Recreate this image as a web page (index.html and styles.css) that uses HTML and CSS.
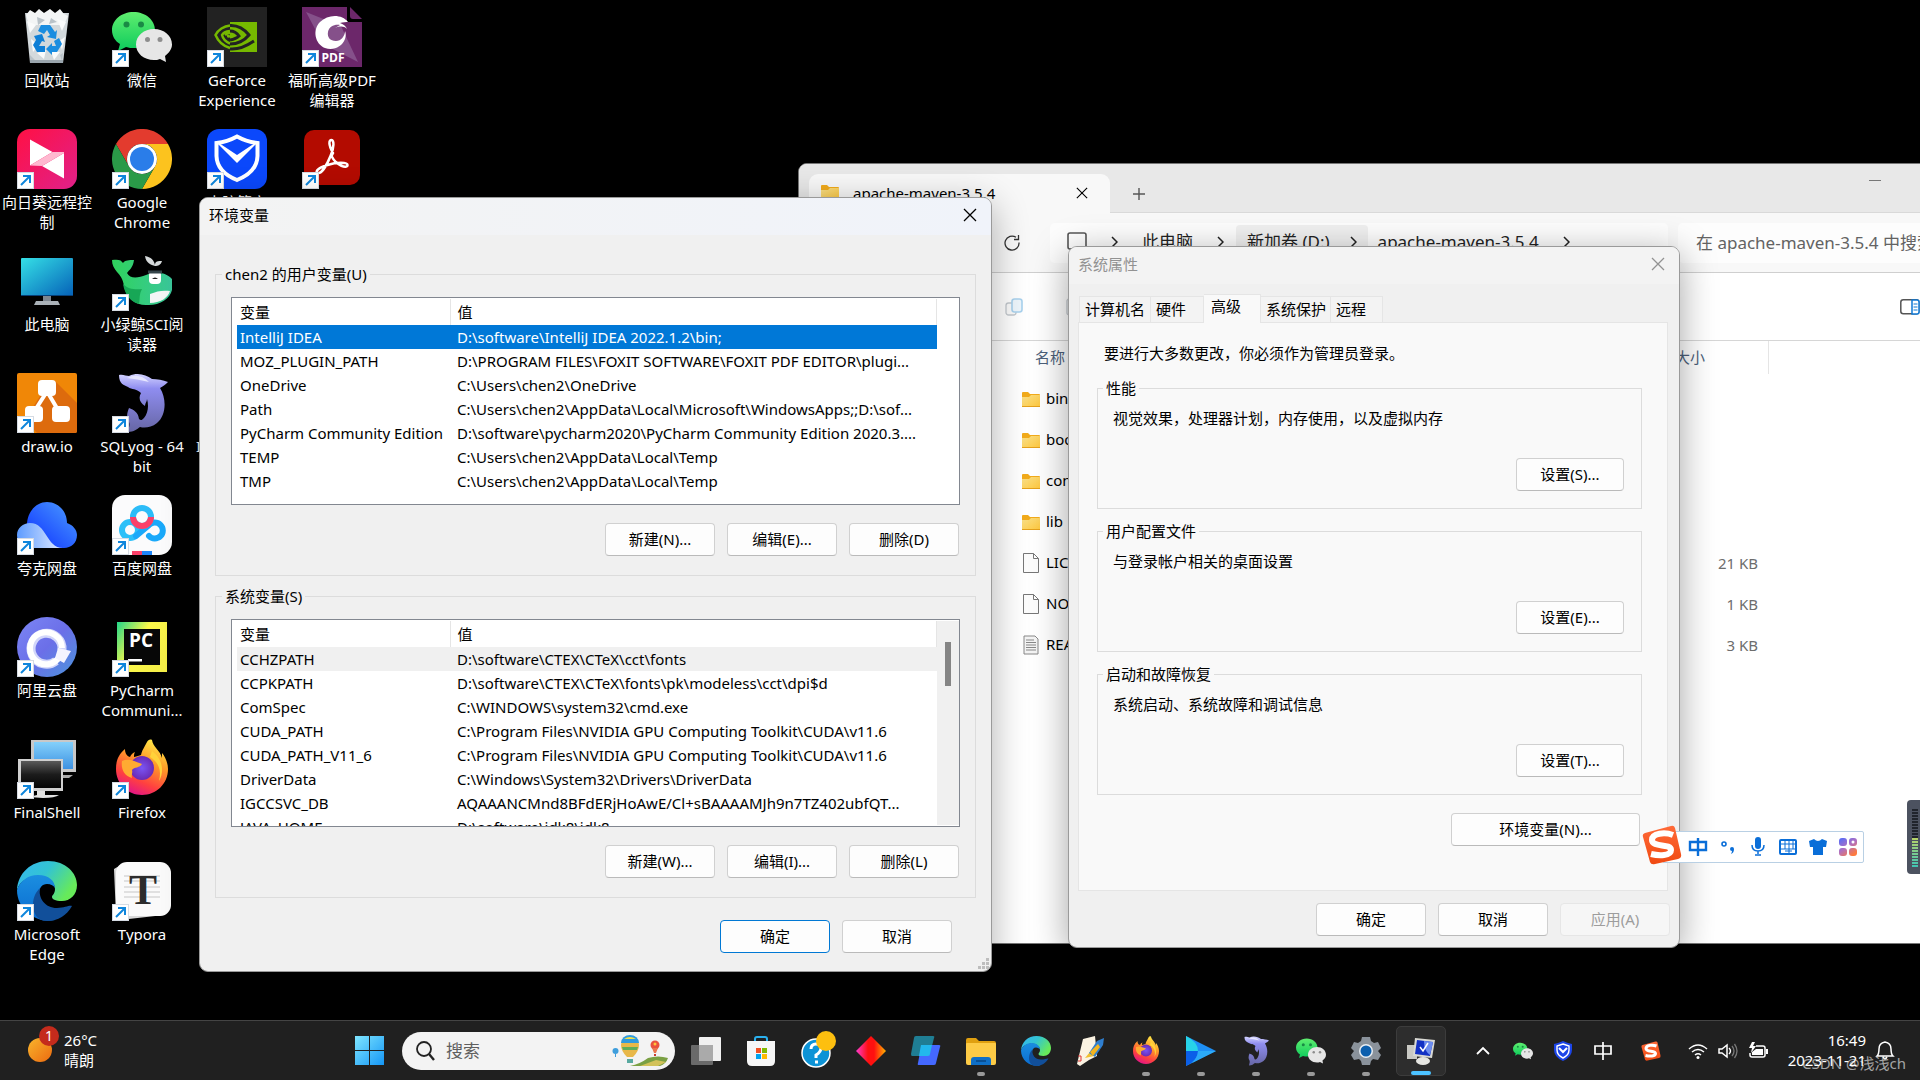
FILE: index.html
```html
<!DOCTYPE html>
<html lang="zh-CN">
<head>
<meta charset="utf-8">
<title>桌面</title>
<meta name="viewport" content="width=device-width, initial-scale=1">
<link rel="stylesheet" href="styles.css">
</head>
<body>
<svg class="defs" aria-hidden="true">
  <defs>
    <linearGradient id="gWechat" x1="0" y1="0" x2="0" y2="1"><stop offset="0" stop-color="#5fee6f"/><stop offset="1" stop-color="#0ccb5c"/></linearGradient>
    <linearGradient id="gSun" x1="0" y1="0" x2="1" y2="1"><stop offset="0" stop-color="#ff1044"/><stop offset="1" stop-color="#e0218a"/></linearGradient>
    <linearGradient id="gScreen" x1="0" y1="0" x2="1" y2="1"><stop offset="0" stop-color="#35e0e6"/><stop offset="1" stop-color="#0561b8"/></linearGradient>
    <linearGradient id="gWhale" x1="0" y1="0" x2="1" y2="0"><stop offset="0" stop-color="#2fd35c"/><stop offset="1" stop-color="#3ac79b"/></linearGradient>
    <linearGradient id="gDolphin" x1="0" y1="0" x2="0" y2="1"><stop offset="0" stop-color="#d3d3ff"/><stop offset=".25" stop-color="#8f8df0"/><stop offset="1" stop-color="#6666a4"/></linearGradient>
    <linearGradient id="gQuark" x1="0" y1="1" x2="1" y2="0"><stop offset="0" stop-color="#0a2cff"/><stop offset="1" stop-color="#4ea0ff"/></linearGradient>
    <linearGradient id="gQuark2" x1="0" y1="0" x2="1" y2="0"><stop offset="0" stop-color="#5d9bff"/><stop offset="1" stop-color="#e4ecff"/></linearGradient>
    <linearGradient id="gAli" x1="0" y1="0" x2="1" y2="1"><stop offset="0" stop-color="#7c86f5"/><stop offset=".5" stop-color="#6b6fe8"/><stop offset="1" stop-color="#4b94dc"/></linearGradient>
    <linearGradient id="gPy" x1="0" y1="0" x2="1" y2=".6"><stop offset="0" stop-color="#21d789"/><stop offset=".5" stop-color="#fcf84a"/><stop offset="1" stop-color="#f5ef48"/></linearGradient>
    <linearGradient id="gBlueScr" x1="0" y1="0" x2="0" y2="1"><stop offset="0" stop-color="#83d0fb"/><stop offset="1" stop-color="#3e92e2"/></linearGradient>
    <linearGradient id="gDarkScr" x1="0" y1="0" x2="0" y2="1"><stop offset="0" stop-color="#5a5a5a"/><stop offset=".5" stop-color="#1c1c1c"/><stop offset="1" stop-color="#050505"/></linearGradient>
    <linearGradient id="gFox" x1=".8" y1="0" x2=".35" y2="1"><stop offset="0" stop-color="#fff04a"/><stop offset=".4" stop-color="#ff9a28"/><stop offset=".75" stop-color="#ff4040"/><stop offset="1" stop-color="#e31587"/></linearGradient>
    <radialGradient id="gFoxBall"><stop offset="0" stop-color="#7a55f5"/><stop offset="1" stop-color="#6a2bb4"/></radialGradient>
    <linearGradient id="gEdge1" x1="0" y1="0" x2="1" y2=".5"><stop offset="0" stop-color="#35b6f2"/><stop offset=".5" stop-color="#33c4d2"/><stop offset="1" stop-color="#67ea5a"/></linearGradient>
    <linearGradient id="gEdge2" x1="0" y1="0" x2="0" y2="1"><stop offset="0" stop-color="#1b8ee0"/><stop offset="1" stop-color="#0a6cd0"/></linearGradient>
    <linearGradient id="gFolder" x1="0" y1="0" x2="1" y2="1"><stop offset="0" stop-color="#f9e08a"/><stop offset="1" stop-color="#ffc83d"/></linearGradient>
    <linearGradient id="gWin" x1="0" y1="0" x2="1" y2="1"><stop offset="0" stop-color="#7fe6ff"/><stop offset="1" stop-color="#1596f5"/></linearGradient>
    <linearGradient id="gDia" x1="0" y1="0" x2="1" y2="0"><stop offset="0" stop-color="#ff3bd0"/><stop offset=".4" stop-color="#ff1010"/><stop offset=".6" stop-color="#ff1010"/><stop offset="1" stop-color="#ffb400"/></linearGradient>
    <linearGradient id="gWeather" x1="0" y1="0" x2="1" y2="1"><stop offset="0" stop-color="#f8b52c"/><stop offset="1" stop-color="#ec6a10"/></linearGradient>
    <linearGradient id="gSogou" x1="0" y1="0" x2="0" y2="1"><stop offset="0" stop-color="#ff6a38"/><stop offset="1" stop-color="#f04a12"/></linearGradient>
    <linearGradient id="gApps" gradientUnits="userSpaceOnUse" x1="2" y1="2" x2="14" y2="19"><stop offset="0" stop-color="#5b6cf5"/><stop offset=".5" stop-color="#b070c0"/><stop offset="1" stop-color="#ff7a3c"/></linearGradient>
  </defs>
  <symbol id="badge" viewBox="0 0 17 17"><rect width="17" height="17" rx="1" fill="#fff"/><rect x=".5" y=".5" width="16" height="16" fill="none" stroke="#d5dbe3"/><path d="M4 13 12.5 4.500M6 4h7v7" fill="none" stroke="#0f86dc" stroke-width="2"/></symbol>
  <symbol id="recycle" viewBox="0 0 60 60">
    <path d="M8 6h44l-6 50H13z" fill="#d3d9dc"/><path d="M9 8 13 3l5 3 4-4 5 4 6-4 5 4 5-4 4 5 4 2-4 9H12z" fill="#f3f5f5"/>
    <path d="m10 14 9 4-6 8zm30-2 9 3-4 9zM14 32l8 6-6 7zm28 2 6-4-3 13zM20 46l9-3-2 9zm14-2 9 1-6 8z" fill="#fafbfb"/><path d="m20 10 8 3-7 5zm14 1 6 4-8 2zM13 48l5 5h-5zm30 0 3-2-1 8z" fill="#b9c2c8"/><path d="M13 53h33v3H13z" fill="#9aa5ad"/>
    <path d="m24 18 9 0 5 7 2-2-1 9-9-2 3-2-3-5-3 4-6-3z" fill="#1a8de0"/><path d="m17 29 8-2 3 8-3-1-3 5 6 0v6h-8l-4-7 3-5z" fill="#0f7fd6"/><path d="m37 34 5-3 3 6-5 8h-5v3l-6-6 6-6v3h4z" fill="#1a8de0"/>
  </symbol>
  <symbol id="wechat" viewBox="0 0 60 60">
    <path d="M21.500 5C9.500 5 0 13 0 23c0 6 3 11 8 14l-2 7 8-4c3 1 5 1 8 1 12 0 21-8 21-18S33.500 5 21.500 5z" fill="url(#gWechat)"/><circle cx="14.500" cy="17.500" r="3" fill="#1a8a45"/><circle cx="29" cy="17.500" r="3" fill="#1a8a45"/>
    <path d="M42 22c-10 0-18 6.500-18 15.500S32 53 42 53c2 0 4 0 6-1l6 3-1-6c4-3 7-7 7-11.500C60 28.500 52 22 42 22z" fill="#e6e6e6"/><circle cx="35.500" cy="32.500" r="2.500" fill="#8d8d8d"/><circle cx="48" cy="32.500" r="2.500" fill="#8d8d8d"/>
  </symbol>
  <symbol id="nvidia" viewBox="0 0 60 60">
    <path d="M0 0h60v60H0z" fill="#222"/><path d="M23 15h27v30H23z" fill="#76b900"/>
    <g fill="none" stroke-width="2.500"><path d="M23 18.500C17 19 11 23 8.500 28 11 34 16 39 23 41" stroke="#76b900"/><path d="M23 24c-4 .5-7 2-8 4 1 4 4 7 8 8.500" stroke="#76b900"/><path d="M23 30c-1-1-2-1-3-1M23 26c-2 0-4 1-5 2" stroke="#76b900"/><path d="M23 18.500c9-.5 15 4.500 19 9.500-5 6-11 9-19 9" stroke="#222" stroke-width="3"/><path d="M23 24c4 0 7 2 9 5-2 2-4 3-9 4" stroke="#222" stroke-width="3"/><path d="M23 42c10 1 18-4 24-8" stroke="#222" stroke-width="3"/></g>
  </symbol>
  <symbol id="foxit" viewBox="0 0 60 60">
    <path d="M0 0h45v15h15v45H0z" fill="#6c276a"/><path d="M48 0 60 12H51q-3 0-3-3z" fill="#6c276a"/><path d="m4 5 35 14 17 36-35-18z" fill="#85508a"/>
    <path d="M46 15C40 7 26 7 18 15s-5 22 5 26c8 3 17-1 20-9 1-3 1-6 0-8 0 5-4 10-9 10-6 0-9-4-8-9 1-6 7-8 12-7l-5 3c5-2 9-2 12 1-1-3-4-5-7-6 3-1 6-1 8-1z" fill="#fff"/>
    <text x="31" y="55" text-anchor="middle" class="svg-pdf">PDF</text>
  </symbol>
  <symbol id="sunflower" viewBox="0 0 60 60"><rect width="60" height="60" rx="13" fill="url(#gSun)"/><path d="M13 10.500 35.500 23 13 36.500zM47 24v25.500L25 37z" fill="#fff"/><path d="M35.500 23H47v1L25 37l-12-.5z" fill="#ffb8d0"/></symbol>
  <symbol id="chrome" viewBox="0 0 60 60"><path d="M4 15a30 30 0 0 1 52 0H30a15 15 0 0 0-13 22.500z" fill="#e33b2e"/><path d="M56 15a30 30 0 0 1-26 45l13-22.500A15 15 0 0 0 30 15z" fill="#fcc31e"/><path d="M30 60A30 30 0 0 1 4 15l13 22.500a15 15 0 0 0 26 0z" fill="#2a9a48"/><circle cx="30" cy="30" r="15" fill="#fff"/><circle cx="30" cy="30" r="12" fill="#2a7de9"/></symbol>
  <symbol id="guard" viewBox="0 0 60 60"><rect width="60" height="60" rx="12" fill="#0b48fb"/><path d="M9.500 14Q20 13 30 7.500 40 13 50.500 14v13Q50 43 30 51 10 43 9.500 27z" fill="none" stroke="#fff" stroke-width="4"/><path d="M12 16 30 34 48 16v-2L30 26 12 14z" fill="#fff"/></symbol>
  <symbol id="acrobat" viewBox="0 0 60 60"><rect x="2" y="1" width="56" height="55" rx="10" fill="#b30b00"/><path d="M31 24c-5-9-4-13-1.500-13s3 7-1 16c-4 10-9 17-12 17-4 0-2-5 9-8 9-3 20-3 20 0 0 4-11 1-16-9z" fill="none" stroke="#fff" stroke-width="2.500"/></symbol>
  <symbol id="thispc" viewBox="0 0 60 60"><path d="M26 44h8v6h-8z" fill="#7d8690"/><path d="M19 50h22l2 4H17z" fill="#aab1b8"/><rect x="4" y="7" width="52" height="38" rx="1" fill="url(#gScreen)"/><path d="M4 44h52v1H4z" fill="#063f78"/></symbol>
  <symbol id="whale" viewBox="0 0 60 60"><path d="M0 9c7-1 9 0 11 3 2-3 6-3 11-3-1 8-5 10-7 13 3 6 11 5 19 2 9-4 20-3 26 4v11c-2 9-13 16-26 15-11 0-20-7-22-19C11 28 8 24 5 21 2 17 0 14 0 9z" fill="url(#gWhale)"/><path d="M11 33c5 5 12 6 19 5-3 5-2 10-3 15-8-2-14-9-16-20z" fill="#17a756"/><path d="M38 43c7-3 13-4 20-3-2 7-10 12-20 12z" fill="#f3f5f5"/><rect x="37" y="20" width="12" height="13" rx="4" fill="#fff"/><path d="M36 21h14" stroke="#35454a" stroke-width="3"/><path d="M40 28q3-3 6 0z" fill="#222"/><path d="M33 5c6 1 9 4 10 9 0-4 3-4 7-4-1 4-4 5-7 5-4-1-9-3-10-10z" fill="#d5d9da"/></symbol>
  <symbol id="drawio" viewBox="0 0 60 60"><rect width="60" height="60" rx="2" fill="#f08707"/><path d="m38 8 22 22v28q0 2-2 2H20L8 47l15-24z" fill="#dd6b0d"/><path d="M29 20 15 42M31 20l13 22" stroke="#fff" stroke-width="4"/><g fill="#fff"><rect x="21" y="7" width="18" height="16" rx="4"/><rect x="8" y="33" width="18" height="16" rx="4"/><rect x="35" y="33" width="18" height="16" rx="4"/></g></symbol>
  <symbol id="dolphin" viewBox="0 0 60 60"><path d="M7 2c4-1 7 1 10 1 9-4 17-1 23 3 5 0 11 1 16 3-3 3-5 4-8 6 7 11 6 28-3 35-6 5-13 5-17 4-3 2-6 5-12 5 1-5 2-7 1-10-3-4-2-9 0-14 5 2 9 4 10 11 2 2 3 1 5-1 4-5 5-12 3-19 0 3-2 4-2 7-5-3-7-8-4-13-5-5-9-3-13-6-4-2-9-3-9-12z" fill="url(#gDolphin)"/><path d="M15 5q12-6 22 4-12-3-22-4z" fill="#e6e6ff"/></symbol>
  <symbol id="quark" viewBox="0 0 60 60"><path d="M10 30C10 17 19 7 30 7s20 9 20 21c6 2 10 7 10 12 0 8-6 13-13 13H12z" fill="url(#gQuark)"/><path d="M0 40c0-7 6-12 13-12 17 0 16 25 33 25H12C5 53 0 48 0 40z" fill="url(#gQuark2)"/></symbol>
  <symbol id="baidu" viewBox="0 0 60 60"><rect width="60" height="60" rx="13" fill="#fbfbfc"/><g fill="none" stroke-width="6"><circle cx="18" cy="35" r="8" stroke="#2cc0f8"/><path d="M24 41 37 30a8 8 0 1 1 0 11" stroke="#1aa9fa" stroke-linecap="round"/><circle cx="30" cy="22" r="9" stroke="#2cbcf8"/><path d="M21 22a9 9 0 0 0 18 0" stroke="#fb4069"/></g><path d="M20 56h10v4H20z" fill="#fb4069"/><path d="M30 56h10v4H30z" fill="#1d86fa"/></symbol>
  <symbol id="aliyun" viewBox="0 0 60 60"><circle cx="30" cy="30" r="30" fill="url(#gAli)"/><path d="M45 33a15.500 15.500 0 1 0-6 11" fill="none" stroke="#d2d6fa" stroke-width="9"/><path d="M45 31a16 16 0 1 0-2 8" fill="none" stroke="#fff" stroke-width="6"/><path d="m41 31 13 3-7 12-9-5z" fill="#f4f4ff"/></symbol>
  <symbol id="pycharm" viewBox="0 0 60 60"><rect x="5" y="5" width="50" height="50" fill="url(#gPy)"/><rect x="12" y="12" width="36" height="36" fill="#070707"/><text x="29" y="30" text-anchor="middle" class="svg-pc">PC</text><path d="M16 42h14v2.500H16z" fill="#fff"/></symbol>
  <symbol id="finalshell" viewBox="0 0 60 60"><path d="M14 1h45v32H14z" fill="#c8c8c8"/><path d="M17 3h39v27H17z" fill="url(#gBlueScr)"/><path d="M38 36h18l-4 3H36z" fill="#aaa"/><path d="M1 20h45v32H1z" fill="#d0d0d0"/><path d="M4 22h40v27H4z" fill="url(#gDarkScr)"/><path d="M20 52h8v4h14q-4 3-16 3l-14-1 8-2z" fill="#e2e2e2"/></symbol>
  <symbol id="firefox" viewBox="0 0 60 60"><path d="M35 3c-3 6-5 8-6 13-2 1-4 1-7 2 0-2 0-3 1-5-3 1-4 3-5 5-4-1-5-5-5-8C6 16 4 22 4 30c0 15 12 26 26 26s26-11 26-26c0-6-3-13-6-16v5c-2-8-9-11-10-18-2-1-4 0-5 2z" fill="url(#gFox)"/><circle cx="30" cy="29" r="12" fill="url(#gFoxBall)"/><path d="M10 22c6-3 12 0 20 3-2 4-8 3-10 6 1 3-1 5 0 8C11 36 9 29 10 22z" fill="#ffab32"/><path d="M40 12c10 7 13 20 7 30 3-12-1-19-9-24z" fill="#ffd23a"/></symbol>
  <symbol id="edge" viewBox="0 0 60 60"><path d="M0 29C1 12 14 0 31 0c18 0 29 12 29 24 0 10-7 16-15 16-7 0-10-2-10-4s3-3 3-8c0-7-7-13-16-13S3 19 0 29z" fill="url(#gEdge1)"/><path d="M0 29c3-9 11-15 21-15 11 0 17 6 17 13-1-2-4-4-8-4-5 0-8 4-8 10 0 15 14 22 16 26-17 4-38-9-38-30z" fill="url(#gEdge2)"/><path d="M23 27c-2 10 5 20 17 20 8 0 12-3 15-2-5 9-14 15-25 15-10 0-14-8-14-16s3-13 7-17z" fill="#114f9a"/></symbol>
  <symbol id="typora" viewBox="0 0 60 60"><path d="m2 8 10-6 40 52-44 5q-4 0-4-4z" fill="#d8d8d8"/><rect x="4" y="1" width="55" height="54" rx="11" fill="#fafafa"/><path d="M12 15h36M12 20h36M12 26h36M12 31h36M12 36h36" stroke="#e0e0e0" stroke-width="2"/><text x="31" y="43" text-anchor="middle" class="svg-t">T</text></symbol>
  <symbol id="folder" viewBox="0 0 18 16"><path d="M0 1q0-1 1-1h5l2 2h9q1 0 1 1v12H0z" fill="#f2ab1b"/><path d="M0 5 7 5 9 3h9v11q0 1-1 1H1q-1 0-1-1z" fill="url(#gFolder)"/><path d="M0 14.500h18" stroke="#e5a11c"/></symbol>
  <symbol id="file" viewBox="0 0 18 20"><path d="M1.500.5h10l5 5v14h-15zM11.500.5v5h5" fill="#fcfcfc" stroke="#777"/></symbol>
  <symbol id="txt" viewBox="0 0 18 20"><path d="M2 1h11l3 3v15H2z" fill="#f4f4f4" stroke="#888"/><path d="M4 5h8M4 7.500h10M4 10h10M4 12.500h10M4 15h10" stroke="#888"/></symbol>
  <symbol id="close" viewBox="0 0 14 14"><path d="m1 1 12 12M13 1 1 13" fill="none" stroke="currentColor" stroke-width="1.300"/></symbol>
  <symbol id="chev" viewBox="0 0 7 12"><path d="m1 1 5 5-5 5" fill="none" stroke="#222" stroke-width="1.500"/></symbol>
  <symbol id="sogou" viewBox="0 0 40 40"><path d="M3 8 29 1q3-1 4 2l6 26q1 4-3 5L13 39q-4 1-5-2L1 12q-1-3 2-4z" fill="url(#gSogou)"/><path d="M31 10c-8-3-21-2-21 5 0 8 19 3 19 10 0 6-12 6-20 4" fill="none" stroke="#fff" stroke-width="6"/></symbol>
</svg>

<main class="desktop">
  <nav class="icons" aria-label="桌面图标">
    <a class="shortcut" href="#"><span class="pic"><svg><use href="#recycle"/></svg></span><span>回收站</span></a>
    <a class="shortcut" href="#"><span class="pic"><svg><use href="#sunflower"/></svg><svg class="arrow"><use href="#badge"/></svg></span><span>向日葵远程控<br>制</span></a>
    <a class="shortcut" href="#"><span class="pic"><svg><use href="#thispc"/></svg></span><span>此电脑</span></a>
    <a class="shortcut" href="#"><span class="pic"><svg><use href="#drawio"/></svg><svg class="arrow"><use href="#badge"/></svg></span><span>draw.io</span></a>
    <a class="shortcut" href="#"><span class="pic"><svg><use href="#quark"/></svg><svg class="arrow"><use href="#badge"/></svg></span><span>夸克网盘</span></a>
    <a class="shortcut" href="#"><span class="pic"><svg><use href="#aliyun"/></svg><svg class="arrow"><use href="#badge"/></svg></span><span>阿里云盘</span></a>
    <a class="shortcut" href="#"><span class="pic"><svg><use href="#finalshell"/></svg><svg class="arrow"><use href="#badge"/></svg></span><span>FinalShell</span></a>
    <a class="shortcut" href="#"><span class="pic"><svg><use href="#edge"/></svg><svg class="arrow"><use href="#badge"/></svg></span><span>Microsoft<br>Edge</span></a>
    <a class="shortcut" href="#"><span class="pic"><svg><use href="#wechat"/></svg><svg class="arrow"><use href="#badge"/></svg></span><span>微信</span></a>
    <a class="shortcut" href="#"><span class="pic"><svg><use href="#chrome"/></svg><svg class="arrow"><use href="#badge"/></svg></span><span>Google<br>Chrome</span></a>
    <a class="shortcut" href="#"><span class="pic"><svg><use href="#whale"/></svg><svg class="arrow"><use href="#badge"/></svg></span><span>小绿鲸SCI阅<br>读器</span></a>
    <a class="shortcut" href="#"><span class="pic"><svg><use href="#dolphin"/></svg><svg class="arrow"><use href="#badge"/></svg></span><span>SQLyog - 64<br>bit</span></a>
    <a class="shortcut" href="#"><span class="pic"><svg><use href="#baidu"/></svg><svg class="arrow"><use href="#badge"/></svg></span><span>百度网盘</span></a>
    <a class="shortcut" href="#"><span class="pic"><svg><use href="#pycharm"/></svg><svg class="arrow"><use href="#badge"/></svg></span><span>PyCharm<br>Communi...</span></a>
    <a class="shortcut" href="#"><span class="pic"><svg><use href="#firefox"/></svg><svg class="arrow"><use href="#badge"/></svg></span><span>Firefox</span></a>
    <a class="shortcut" href="#"><span class="pic"><svg><use href="#typora"/></svg><svg class="arrow"><use href="#badge"/></svg></span><span>Typora</span></a>
    <a class="shortcut" href="#"><span class="pic"><svg><use href="#nvidia"/></svg><svg class="arrow"><use href="#badge"/></svg></span><span>GeForce<br>Experience</span></a>
    <a class="shortcut" href="#"><span class="pic"><svg><use href="#guard"/></svg><svg class="arrow"><use href="#badge"/></svg></span><span>电脑管家</span></a>
    <a class="shortcut row4" href="#"><span class="pic"></span><span>IntelliJ IDEA</span></a>
    <a class="shortcut column4" href="#"><span class="pic"><svg><use href="#foxit"/></svg><svg class="arrow"><use href="#badge"/></svg></span><span>福昕高级PDF<br>编辑器</span></a>
    <a class="shortcut column4 row2" href="#"><span class="pic"><svg><use href="#acrobat"/></svg><svg class="arrow"><use href="#badge"/></svg></span><span>Acrobat</span></a>
  </nav>

  <section class="window explorer" aria-label="apache-maven-3.5.4">
    <header class="tabstrip">
      <div class="etab"><svg class="i18"><use href="#folder"/></svg><span>apache-maven-3.5.4</span><button class="bare" aria-label="关闭标签页"><svg class="i12"><use href="#close"/></svg></button></div>
      <button class="bare newtab" aria-label="新建标签页"><svg class="i12" viewBox="0 0 12 12"><path d="M6 0v12M0 6h12" stroke="#555" stroke-width="1.400" fill="none"/></svg></button>
      <button class="bare minimise" aria-label="最小化"></button>
    </header>
    <div class="addressrow">
      <button class="bare refresh" aria-label="刷新"><svg class="i18" viewBox="0 0 18 18"><path d="M16 8.500A7 7 0 1 1 13 3.300M15.500 1v4.500H11" fill="none" stroke="#333" stroke-width="1.300"/></svg></button>
      <div class="address">
        <svg class="i20" viewBox="0 0 20 20"><rect x="1" y="1" width="18" height="16" rx="2" fill="none" stroke="#555" stroke-width="1.600"/><path d="M6 19h8" stroke="#555"/></svg>
        <svg class="chev"><use href="#chev"/></svg>
        <a href="#">此电脑</a>
        <svg class="chev"><use href="#chev"/></svg>
        <span class="crumb"><a href="#">新加卷 (D:)</a><svg class="chev"><use href="#chev"/></svg></span>
        <a href="#">apache-maven-3.5.4</a>
        <svg class="chev"><use href="#chev"/></svg>
      </div>
      <input class="esearch" type="search" aria-label="搜索" placeholder="在 apache-maven-3.5.4 中搜索">
    </div>
    <div class="toolbar">
      <button class="bare" aria-label="复制"><svg class="i18" viewBox="0 0 18 18"><rect x="1" y="5" width="10" height="12" rx="2.500" fill="#fafafa" stroke="#c4c9ce" stroke-width="1.300"/><rect x="7" y="1" width="10" height="13" rx="2.500" fill="#eef6fc" stroke="#a9d2ee" stroke-width="1.600"/></svg></button>
      <button class="bare" aria-label="粘贴"><svg class="i18" viewBox="0 0 18 18"><rect x="1" y="1" width="13" height="16" rx="2" fill="none" stroke="#c4c9ce" stroke-width="1.300"/></svg></button>
      <button class="bare preview" aria-label="详细信息"><svg class="i20" viewBox="0 0 20 16"><rect x=".8" y=".8" width="18" height="14" rx="2.500" fill="#fff" stroke="#555" stroke-width="1.500"/><path d="M12 1h5q2 0 2 2v10q0 2-2 2h-5z" fill="#fff" stroke="#0f78d4" stroke-width="1.500"/><path d="M13.500 5h4M13.500 8h4M13.500 11h4" stroke="#0f78d4"/></svg></button>
    </div>
    <table class="files">
      <thead><tr><th>名称</th><th class="size">大小</th><th></th></tr></thead>
      <tbody>
        <tr><td><svg class="i18"><use href="#folder"/></svg>bin</td><td></td></tr>
        <tr><td><svg class="i18"><use href="#folder"/></svg>boot</td><td></td></tr>
        <tr><td><svg class="i18"><use href="#folder"/></svg>conf</td><td></td></tr>
        <tr><td><svg class="i18"><use href="#folder"/></svg>lib</td><td></td></tr>
        <tr><td><svg class="i20"><use href="#file"/></svg>LICENSE</td><td>21 KB</td></tr>
        <tr><td><svg class="i20"><use href="#file"/></svg>NOTICE</td><td>1 KB</td></tr>
        <tr><td><svg class="i20"><use href="#txt"/></svg>README.txt</td><td>3 KB</td></tr>
      </tbody>
    </table>
  </section>

  <section class="window props" role="dialog" aria-label="系统属性">
    <header class="titlebar"><h2>系统属性</h2><button class="bare" aria-label="关闭"><svg class="i14"><use href="#close"/></svg></button></header>
    <div class="ptabs" role="tablist">
      <button role="tab" class="ptab">计算机名</button><button role="tab" class="ptab">硬件</button><button role="tab" class="ptab active" aria-selected="true">高级</button><button role="tab" class="ptab">系统保护</button><button role="tab" class="ptab">远程</button>
    </div>
    <div class="pane">
      <p class="intro">要进行大多数更改，你必须作为管理员登录。</p>
      <fieldset><legend>性能</legend><p>视觉效果，处理器计划，内存使用，以及虚拟内存</p><button class="btn">设置(S)...</button></fieldset>
      <fieldset><legend>用户配置文件</legend><p>与登录帐户相关的桌面设置</p><button class="btn">设置(E)...</button></fieldset>
      <fieldset><legend>启动和故障恢复</legend><p>系统启动、系统故障和调试信息</p><button class="btn">设置(T)...</button></fieldset>
      <button class="btn envbtn">环境变量(N)...</button>
    </div>
    <footer class="actions"><button class="btn">确定</button><button class="btn">取消</button><button class="btn" disabled>应用(A)</button></footer>
  </section>

  <section class="window env" role="dialog" aria-label="环境变量">
    <header class="titlebar"><h2>环境变量</h2><button class="bare" aria-label="关闭"><svg class="i14"><use href="#close"/></svg></button></header>
    <div class="envbody">
      <fieldset>
        <legend>chen2 的用户变量(U)</legend>
        <div class="list">
          <table class="vars">
            <thead><tr><th>变量</th><th>值</th></tr></thead>
            <tbody>
              <tr class="selected"><td>IntelliJ IDEA</td><td>D:\software\IntelliJ IDEA 2022.1.2\bin;</td></tr>
              <tr><td>MOZ_PLUGIN_PATH</td><td>D:\PROGRAM FILES\FOXIT SOFTWARE\FOXIT PDF EDITOR\plugi...</td></tr>
              <tr><td>OneDrive</td><td>C:\Users\chen2\OneDrive</td></tr>
              <tr><td>Path</td><td>C:\Users\chen2\AppData\Local\Microsoft\WindowsApps;;D:\sof...</td></tr>
              <tr><td>PyCharm Community Edition</td><td>D:\software\pycharm2020\PyCharm Community Edition 2020.3....</td></tr>
              <tr><td>TEMP</td><td>C:\Users\chen2\AppData\Local\Temp</td></tr>
              <tr><td>TMP</td><td>C:\Users\chen2\AppData\Local\Temp</td></tr>
            </tbody>
          </table>
        </div>
        <div class="row"><button class="btn">新建(N)...</button><button class="btn">编辑(E)...</button><button class="btn">删除(D)</button></div>
      </fieldset>
      <fieldset>
        <legend>系统变量(S)</legend>
        <div class="list">
          <table class="vars">
            <thead><tr><th>变量</th><th>值</th></tr></thead>
            <tbody>
              <tr class="focused"><td>CCHZPATH</td><td>D:\software\CTEX\CTeX\cct\fonts</td></tr>
              <tr><td>CCPKPATH</td><td>D:\software\CTEX\CTeX\fonts\pk\modeless\cct\dpi$d</td></tr>
              <tr><td>ComSpec</td><td>C:\WINDOWS\system32\cmd.exe</td></tr>
              <tr><td>CUDA_PATH</td><td>C:\Program Files\NVIDIA GPU Computing Toolkit\CUDA\v11.6</td></tr>
              <tr><td>CUDA_PATH_V11_6</td><td>C:\Program Files\NVIDIA GPU Computing Toolkit\CUDA\v11.6</td></tr>
              <tr><td>DriverData</td><td>C:\Windows\System32\Drivers\DriverData</td></tr>
              <tr><td>IGCCSVC_DB</td><td>AQAAANCMnd8BFdERjHoAwE/Cl+sBAAAAMJh9n7TZ402ubfQT...</td></tr>
              <tr><td>JAVA_HOME</td><td>D:\software\jdk8\jdk8</td></tr>
            </tbody>
          </table>
          <div class="scroll"><span class="thumb"></span></div>
        </div>
        <div class="row"><button class="btn">新建(W)...</button><button class="btn">编辑(I)...</button><button class="btn">删除(L)</button></div>
      </fieldset>
      <div class="row final"><button class="btn primary">确定</button><button class="btn">取消</button></div>
    </div>
    <svg class="grip" viewBox="0 0 11 11"><path d="M8 0h3v3H8zM8 4h3v3H8zM4 4h3v3H4zM8 8h3v3H8zM4 8h3v3H4zM0 8h3v3H0z" fill="#bdbdbd"/></svg>
  </section>

  <aside class="ime" aria-label="输入法">
    <svg class="logo"><use href="#sogou"/></svg>
    <div class="imebar">
      <button class="bare" aria-label="中文"><svg class="i20" viewBox="0 0 20 20"><path d="M2 5h16v8H2zM10 1v18" fill="none" stroke="#0a6ed8" stroke-width="2.400"/></svg></button>
      <button class="bare" aria-label="标点"><svg class="i20" viewBox="0 0 20 20"><circle cx="6" cy="7" r="2" fill="none" stroke="#0a6ed8" stroke-width="1.600"/><path d="M12 12a2 2 0 1 1 4 0q0 4-3 5 1-2 1-3-2 0-2-2z" fill="#0a6ed8"/></svg></button>
      <button class="bare" aria-label="语音"><svg class="i20" viewBox="0 0 20 20"><rect x="7" y="0" width="6" height="12" rx="3" fill="#0a6ed8"/><path d="M4 8q0 6 6 6t6-6M10 14v3M7 18h6" fill="none" stroke="#0a6ed8" stroke-width="1.500"/></svg></button>
      <button class="bare" aria-label="键盘"><svg class="i20" viewBox="0 0 20 20"><rect x="2" y="3" width="16" height="14" rx="1" fill="none" stroke="#0a6ed8" stroke-width="2"/><path d="M3 7h14M3 12h14M7 4v8M11 4v12M15 4v8M7 14h7" stroke="#0a6ed8"/></svg></button>
      <button class="bare" aria-label="皮肤"><svg class="i20" viewBox="0 0 20 20"><path d="m1 4 5-2q4 4 8 0l5 2-1 6h-3v8H5v-8H2z" fill="#0a6ed8"/></svg></button>
      <button class="bare" aria-label="工具箱"><svg class="i20" viewBox="0 0 20 20"><g fill="url(#gApps)"><rect x="1" y="1" width="8" height="8" rx="3"/><rect x="11" y="1" width="8" height="8" rx="3"/><rect x="1" y="11" width="8" height="8" rx="3"/><rect x="11" y="11" width="8" height="8" rx="3"/></g><circle cx="15" cy="5" r="1.500" fill="#fff"/></svg></button>
    </div>
  </aside>
  <div class="meter" aria-hidden="true"><span class="idle"></span><span class="level"></span></div>
</main>

<footer class="taskbar">
  <button class="bare weather"><svg class="wicon" viewBox="0 0 32 40"><circle cx="12" cy="27" r="12" fill="url(#gWeather)"/><circle cx="21" cy="13" r="10" fill="#c42b1c"/><text x="21" y="18" text-anchor="middle" class="svg-one">1</text></svg><span class="wtext"><span>26°C</span><span>晴朗</span></span></button>
  <button class="bare app" aria-label="开始"><svg class="i30" viewBox="0 0 30 30"><path d="M0 0h14v14H0zM15 0h14v14H15zM0 15h14v14H0zM15 15h14v14H15z" fill="url(#gWin)"/></svg></button>
  <label class="search">
    <svg class="i20" viewBox="0 0 20 20"><circle cx="9" cy="8" r="7" fill="none" stroke="#222" stroke-width="1.800"/><path d="m14 13 5 6" stroke="#222" stroke-width="2.400"/></svg>
    <input type="search" placeholder="搜索" aria-label="搜索">
    <svg class="balloons" viewBox="0 0 56 32"><path d="M18 31q10-2 18-8 10-3 20 0-2 6-8 8z" fill="#7aa043"/><path d="m28 31 16-6 10 2-8 4z" fill="#d3c25a"/><path d="M9 10a9 8 0 0 1 18 0q0 6-6 12h-6Q9 16 9 10z" fill="#e8b84a"/><path d="M9 8a9 8 0 0 1 18 0z" fill="#2f9be0"/><path d="M12 4q6-4 12 0z" fill="#f3e04c"/><path d="M10 12h16l-1 3H11z" fill="#5fae5a"/><path d="M15 24h6v4h-6z" fill="#58a9a0"/><circle cx="3.500" cy="16" r="3" fill="#3f9edc"/><path d="M3 19h1v3H3z" fill="#3f9edc"/><circle cx="43" cy="10" r="4.500" fill="#e9513e"/><path d="M40 13h6l-2 5h-2z" fill="#e9764e"/><path d="M42 19h2v2h-2z" fill="#c83b2f"/><circle cx="43" cy="9" r="1.500" fill="#ffc53a"/></svg>
  </label>
  <button class="bare app" aria-label="任务视图"><svg class="i30" viewBox="0 0 30 30"><rect x="8" y="1" width="22" height="24" rx="1" fill="#f0f0f0"/><rect x="0" y="9" width="22" height="20" rx="1" fill="#6a6a6a"/><path d="M8 9h14v16H8z" fill="#aaa"/></svg></button>
  <button class="bare app" aria-label="应用商店"><svg class="i30" viewBox="0 0 30 30"><path d="M9 7V3q0-2 2-2h8q2 0 2 2v4" fill="none" stroke="#2ab0ee" stroke-width="2"/><path d="M1 5h28v20q0 5-5 5H6q-5 0-5-5z" fill="#f6f6f6"/><path d="M10 12h5v5h-5z" fill="#f25022"/><path d="M16 12h5v5h-5z" fill="#7fba00"/><path d="M10 18h5v5h-5z" fill="#00a4ef"/><path d="M16 18h5v5h-5z" fill="#ffb900"/></svg></button>
  <button class="bare app" aria-label="帮助"><svg class="i40" viewBox="0 0 40 40"><circle cx="20" cy="22" r="14" fill="#0d93d6" stroke="#fff" stroke-width="1.500"/><path d="M15 18q0-5 5-5t5 4-5 7v3M19 31h3" fill="none" stroke="#fff" stroke-width="3"/><circle cx="30" cy="10" r="10" fill="#fdbf0f"/></svg></button>
  <button class="bare app" aria-label="启动器"><svg class="i30" viewBox="0 0 30 30"><path d="m15 0 15 15-15 15L0 15z" fill="url(#gDia)"/></svg></button>
  <button class="bare app" aria-label="网盘"><svg class="i30" viewBox="0 0 30 30"><path d="M5 0h17q2 0 1 2l-4 16q0 2-2 2H1q-1 0-1-2L3 2q0-2 2-2z" fill="#1f7e94"/><path d="M12 9h16q2 0 1 2l-4 16q0 2-2 2H8q-2 0-1-2l3-16q0-2 2-2z" fill="#4468ff"/><path d="M10 9h11l-2 9q0 2-2 2H8z" fill="#22b8ec"/></svg></button>
  <button class="bare app running" aria-label="文件资源管理器"><svg class="i30" viewBox="0 0 30 30"><path d="M0 4q0-2 2-2h8l3 3h15q2 0 2 2v20H0z" fill="#e0a010"/><path d="M0 8q0-1 1-1h28q1 0 1 1v19q0 2-2 2H2q-2 0-2-2z" fill="#fdcb46"/><path d="M5 29v-5q0-3 3-3h14q3 0 3 3v5z" fill="#0f6fc6"/><path d="M10 25h10" stroke="#084f94" stroke-width="2"/></svg></button>
  <button class="bare app" aria-label="Edge"><svg class="i30"><use href="#edge"/></svg></button>
  <button class="bare app" aria-label="记事"><svg class="i30" viewBox="0 0 30 30"><path d="M7 3 19 0l2 20-8 4-9 6-3-2z" fill="#fbf3e2"/><path d="M9 22 14 16l4 4z" fill="#f0c030"/><path d="m13 17 8-12 7-3-1 7-8 12z" fill="#2f7fd0"/><path d="m14 16 8-8 2 3-7 9z" fill="#f3b51f"/><path d="M2 20h3v5H2" fill="none" stroke="#d33"/></svg></button>
  <button class="bare app running" aria-label="Firefox"><svg class="i30"><use href="#firefox"/></svg></button>
  <button class="bare app running" aria-label="播放器"><svg class="i30" viewBox="0 0 30 30"><path d="m0 0 30 15L0 30z" fill="#1e8ff5"/><path d="M0 0q12 6 12 15H0z" fill="#27d3e8"/><path d="M0 30q12-6 12-15H0z" fill="#0b5fe8"/><path d="m12 15 18 0L6 27q6-6 6-12z" fill="#2caaf8"/></svg></button>
  <button class="bare app running" aria-label="SQLyog"><svg class="i30"><use href="#dolphin"/></svg></button>
  <button class="bare app running" aria-label="微信"><svg class="i30"><use href="#wechat"/></svg></button>
  <button class="bare app running" aria-label="设置"><svg class="i30" viewBox="0 0 30 30"><path d="m11 1 8 0 1 4 3 2 4-1 3 6-3 3 3 4-3 5-5-1-2 2-1 4h-8l-1-4-2-2-5 1-3-5 3-4-3-3 3-6 4 1 3-2z" fill="#8a929b"/><circle cx="15" cy="15" r="7" fill="#e9eef3"/><circle cx="15" cy="15" r="5.500" fill="#0c5fae"/></svg></button>
  <button class="bare app running current" aria-label="系统属性"><svg class="i30" viewBox="0 0 30 30"><path d="M1 9h10v14H1z" fill="#c9c9c4"/><path d="m9 2 20 2-3 18-19-2z" fill="#d9d9d4"/><path d="m11 4 16 2-3 14-15-2z" fill="#1331c4"/><path d="m18 5 9 1-3 13q-6-4-6-14z" fill="#6d8df0"/><path d="m14 11 3 4 5-8" fill="none" stroke="#fff" stroke-width="1.500"/><ellipse cx="17" cy="25" rx="7" ry="4" fill="#e6e6e2"/></svg></button>
  <div class="tray">
    <button class="bare t40" aria-label="显示隐藏的图标"><svg class="i14" viewBox="0 0 14 14"><path d="m1 10 6-6 6 6" fill="none" stroke="#fff" stroke-width="1.800"/></svg></button>
    <button class="bare t40" aria-label="微信"><svg class="i20"><use href="#wechat"/></svg></button>
    <button class="bare t40" aria-label="电脑管家"><svg class="i20" viewBox="0 0 20 20"><path d="M10 0q4 2 9 3v6q0 7-9 11Q1 16 1 9V3q5-1 9-3z" fill="#1c45e8"/><path d="M10 3q3 1 6 2v4q0 5-6 8-6-3-6-8V5q3-1 6-2z" fill="none" stroke="#fff" stroke-width="1.400"/><path d="m6 7 4 4 4-4" fill="none" stroke="#fff" stroke-width="2"/></svg></button>
    <button class="bare t40 lang" aria-label="中文输入"><svg class="i20" viewBox="0 0 20 20"><path d="M2 5h16v8H2zM10 1v18" fill="none" stroke="#fff" stroke-width="1.700"/></svg></button>
    <button class="bare t40 sg" aria-label="搜狗"><svg class="i20"><use href="#sogou"/></svg></button>
    <button class="bare t30" aria-label="网络"><svg class="i20" viewBox="0 0 20 20"><g fill="none" stroke="#fff" stroke-width="1.500"><path d="M1 8q9-8 18 0M4 11q6-5 12 0M7 14q3-2.500 6 0"/></g><circle cx="10" cy="16.500" r="1.500" fill="#fff"/></svg></button>
    <button class="bare t30" aria-label="音量"><svg class="i20" viewBox="0 0 20 20"><path d="M1 8h3l5-4v12l-5-4H1z" fill="none" stroke="#fff" stroke-width="1.500"/><path d="M11 7q3 3 0 6" fill="none" stroke="#fff" stroke-width="1.400"/><path d="M14 5q4 5 0 10M16.500 3q5 7 0 14" fill="none" stroke="#777" stroke-width="1.300"/></svg></button>
    <button class="bare t30" aria-label="电池"><svg class="i20" viewBox="0 0 20 20"><path d="M8 5h7q2 0 2 2v7q0 2-2 2H4q-2 0-2-2v-2" fill="none" stroke="#fff" stroke-width="1.500"/><path d="M4 14V11l4-3h7v6zM18 8h2v5h-2z" fill="#fff"/><path d="M4 1 1 7h3l-1 5 5-7H5l2-4z" fill="#fff"/></svg></button>
    <button class="bare clock"><span>16:49</span><span>2023-11-21</span></button>
    <button class="bare bell" aria-label="通知"><svg class="i20" viewBox="0 0 20 20"><path d="M2 15q2-2 2-7 0-6 6-7 6 1 6 7 0 5 2 7zM8 16q2 4 4 0" fill="none" stroke="#fff" stroke-width="1.500"/></svg></button>
  </div>
  <span class="watermark">CSDN @浅浅ch</span>
</footer>
</body>
</html>
```
FILE: styles.css
```css
* { box-sizing: border-box; }
html, body { height: 100%; }
body {
  margin: 0;
  display: flex;
  flex-direction: column;
  overflow: hidden;
  background: #000;
  color: #000;
  font: 15px/20px "Noto Sans", "Noto Sans CJK SC", sans-serif;
}
h2, p { margin: 0; font-size: 15px; font-weight: 400; }
a { color: inherit; text-decoration: none; }
button, input { font: inherit; color: inherit; }
svg { display: block; flex: none; }
.defs { position: absolute; width: 0; height: 0; }
.bare {
  border: 0; padding: 0; background: none;
  display: flex; align-items: center; justify-content: center;
}
.i12 { width: 12px; height: 12px; }
.i14 { width: 14px; height: 14px; }
.i18 { width: 18px; height: 18px; }
.i20 { width: 20px; height: 20px; }
.i30 { width: 30px; height: 30px; }
.i40 { width: 40px; height: 40px; }
.svg-pdf { font: 700 12px "Open Sans", sans-serif; fill: #fff; }
.svg-pc { font: 700 19px "Open Sans", sans-serif; fill: #fff; }
.svg-t { font: 700 42px "Liberation Serif", serif; fill: #2c2c2c; }
.svg-one { font: 14px "Noto Sans", sans-serif; fill: #fff; }

/* Desktop */
.desktop { position: relative; flex: 1; min-height: 0; overflow: hidden; background: #000; }
.icons {
  display: grid;
  grid-template-rows: repeat(8, 122px);
  grid-auto-columns: 95px;
  grid-auto-flow: column;
  justify-content: start;
  padding-top: 7px;
}
.shortcut { display: flex; flex-direction: column; align-items: center; padding-right: 1px; color: #fff; text-align: center; white-space: nowrap; }
.column4 { grid-column: 4; grid-row: 1; }
.row2 { grid-row: 2; }
.row4 { grid-column: 3; grid-row: 4; }
.pic { position: relative; width: 60px; height: 60px; margin-bottom: 3px; }
.pic svg { width: 60px; height: 60px; }
.pic .arrow { position: absolute; left: 0; bottom: 0; width: 17px; height: 17px; }

/* Windows */
.window { position: absolute; border: 1px solid #9a9a9a; border-radius: 9px; background: #f0f0f0; }
.titlebar {
  display: flex; align-items: center; justify-content: space-between;
  height: 37px; padding: 0 14px 3px 9px;
  border-radius: 8px 8px 0 0;
}
.btn {
  width: 110px; height: 33px; padding: 0 0 2px;
  border: 1px solid #d0d0d0; border-bottom-color: #bababa; border-radius: 4px;
  background: #fdfdfd;
}
.btn.primary { border-color: #0078d4; }
.btn:disabled { color: #9d9d9d; background: #f6f6f6; border-color: #e6e6e6; }
fieldset { margin: 0; border: 1px solid #dcdcdc; min-width: 0; }
legend { padding: 0 3px; height: 20px; }

/* Environment variables */
.env { left: 199px; top: 197px; width: 793px; box-shadow: 0 8px 36px rgba(0, 0, 0, .32); }
.env .titlebar { background: linear-gradient(90deg, #f3f3f3, #f0f3fa); }
.envbody { padding: 29px 15px 18px; }
.env fieldset { padding: 13px 15px 19px; }
.env fieldset + fieldset { margin-top: 10px; }
.env legend { margin-left: -9px; }
.list { display: flex; height: 208px; padding: 1px 1px 1px 5px; border: 1px solid #828790; background: #fff; overflow: hidden; }
.vars { flex: none; width: 700px; height: 0; border-collapse: collapse; table-layout: fixed; }
.vars th, .vars td { height: 24px; padding: 0 0 0 7px; text-align: left; font-weight: 400; white-space: nowrap; overflow: hidden; }
.vars th { height: 26px; border-right: 1px solid #e5e5e5; }
.vars th:first-child { width: 213px; }
.vars th:first-child, .vars td:first-child { padding-left: 3px; }
.selected { background: #0078d7; color: #fff; }
.focused { background: #f0f0f0; }
.scroll { flex: 1; padding: 21px 8px 0; background: #f0f0f0; }
.thumb { display: block; width: 6px; height: 44px; background: #858585; }
.row { display: flex; justify-content: flex-end; gap: 12px; margin-top: 18px; padding-right: 1px; }
.row.final { margin-top: 22px; padding-right: 24px; }
.grip { position: absolute; right: 2px; bottom: 2px; width: 11px; height: 11px; }

/* System properties */
.props { left: 1068px; top: 246px; width: 612px; box-shadow: 0 8px 36px rgba(0, 0, 0, .36); }
.props .titlebar { background: #f3f3f3; color: #929292; }
.ptabs { display: flex; align-items: flex-end; height: 38px; padding-left: 10px; }
.ptab { height: 26px; padding: 0 5px 2px; border: 1px solid #e5e5e5; border-bottom: 0; background: #f3f3f3; text-align: left; white-space: nowrap; }
.ptab + .ptab { border-left: 0; }
.ptab:nth-child(1) { width: 72px; }
.ptab:nth-child(2) { width: 53px; }
.ptab:nth-child(3) { width: 57px; }
.ptab:nth-child(4) { width: 70px; }
.ptab:nth-child(5) { width: 52px; }
.ptab.active { position: relative; z-index: 1; height: 29px; margin-bottom: -1px; padding-bottom: 6px; padding-left: 7px; background: #f9f9f9; }
.pane { display: flex; flex-direction: column; gap: 12px; margin: 0 11px 0 9px; padding: 20px 25px 44px 18px; border: 1px solid #e5e5e5; background: #f9f9f9; }
.intro { margin: 0 0 3px 7px; }
.props fieldset { display: block; padding: 10px 17px 17px 15px; }
.props legend { margin-left: -10px; }
.props fieldset .btn { display: block; width: 108px; margin: 30px 0 0 auto; }
.envbtn { align-self: flex-end; width: 189px; margin: 6px 2px 0 0; }
.actions { display: flex; justify-content: flex-end; gap: 12px; padding: 12px 9px 11px; }

/* File explorer */
.explorer { left: 798px; right: -120px; top: 163px; height: 781px; border-color: #777; background: #fff; overflow: hidden; }
.tabstrip { display: flex; align-items: flex-end; height: 49px; padding-left: 10px; background: #e8e8e8; border-bottom: 1px solid #d9d9d9; }
.etab { display: flex; align-items: center; gap: 14px; width: 301px; height: 39px; margin-bottom: -1px; padding: 0 22px 2px 12px; border-radius: 9px 9px 0 0; background: #f8f8f8; }
.etab .bare { margin-left: auto; }
.newtab { width: 57px; height: 37px; }
.minimise { align-self: flex-start; width: 12px; height: 17px; margin: 0 158px 0 auto; border-bottom: 1px solid #777; }
.addressrow { display: flex; align-items: center; height: 60px; padding: 0 0 0 204px; background: #f8f8f8; border-bottom: 1px solid #cfcfcf; font-size: 17px; }
.address { display: flex; align-items: center; gap: 24px; width: 618px; height: 40px; margin: 0 10px 0 29px; padding: 0 0 2px 17px; border-radius: 5px; background: #fdfdfd; white-space: nowrap; }
.address a { color: #222; }
.crumb { display: flex; align-items: center; gap: 20px; height: 34px; margin: 0 -14px 0 -12px; padding: 0 11px; border-radius: 4px; background: #f0f0f0; }
.chev { width: 7px; height: 12px; }
.esearch { flex: 1; height: 40px; padding: 0 18px; border: 0; border-radius: 5px; background: #fdfdfd; outline: 0; }
.esearch::placeholder { color: #636363; opacity: 1; }
.toolbar { display: flex; align-items: center; gap: 43px; height: 68px; padding: 0 119px 0 206px; border-bottom: 1px solid #d6d6d6; }
.preview { margin-left: auto; }
.files { width: calc(100% - 219px); margin-left: 219px; border-collapse: collapse; table-layout: fixed; }
.files th { height: 33px; padding: 0 0 2px 17px; text-align: left; font-weight: 400; color: #4c607a; border-right: 1px solid #e5e5e5; }
.files th:first-child { width: 650px; border: 0; }
.files th.size { width: 100px; padding-left: 7px; }
.files tbody::before { content: ""; display: block; height: 4px; }
.files td { height: 41px; padding: 0 10px 0 4px; }
.files td svg { display: inline-block; vertical-align: middle; margin-right: 6px; }
.files td .i20 { width: 18px; }
.files td:last-child { text-align: right; color: #6d6d6d; }

/* Input method bar and level meter */
.ime { position: absolute; left: 1642px; top: 825px; display: flex; align-items: flex-start; }
.logo { position: relative; width: 40px; height: 40px; margin-right: -20px; }
.imebar { display: flex; align-items: center; gap: 10px; height: 32px; margin-top: 6px; padding: 0 5px 0 25px; border: 1px solid #b9d0e4; border-radius: 2px; background: #fff; }
.meter { position: absolute; right: 0; top: 800px; width: 13px; height: 74px; padding: 9px 2px 0 5px; border-radius: 4px 0 0 4px; background: #4c5260; }
.idle, .level { display: block; height: 29px; background: repeating-linear-gradient(#20242c 0 2px, #4c5260 2px 3px); }
.level { background: repeating-linear-gradient(transparent 0 2px, #4c5260 2px 3px), linear-gradient(#b8d468, #3fc4b4); }

/* Taskbar */
.taskbar { position: relative; display: flex; align-items: center; height: 60px; background: #202020; border-top: 1px solid #444; color: #fff; }
.weather { width: 342px; height: 60px; padding-left: 28px; justify-content: flex-start; gap: 4px; }
.wicon { width: 32px; height: 40px; margin-bottom: 15px; }
.wtext, .clock { display: flex; flex-direction: column; line-height: 20px; padding-bottom: 2px; }
.wtext { align-items: flex-start; }
.app { position: relative; width: 55px; height: 50px; flex: none; }
.running::after { content: ""; position: absolute; bottom: 0; left: 50%; width: 8px; height: 4px; margin-left: -4px; border-radius: 2px; background: #999; }
.current { width: 50px; margin: 0 3px; border: 1px solid #3c3c3c; border-radius: 5px; background: #2d2d2d; }
.current::after { width: 20px; margin-left: -10px; background: #4cc2ff; }
.search { display: flex; align-items: center; width: 273px; height: 38px; margin: 0 3px 0 5px; padding: 0 7px 0 13px; gap: 11px; border-radius: 19px; background: #f3f3f3; font-size: 17px; }
.search input { flex: 1; min-width: 0; padding: 0; border: 0; background: none; outline: 0; }
.search input::placeholder { color: #5f5f5f; opacity: 1; }
.balloons { width: 56px; height: 32px; }
.tray { display: flex; align-items: center; margin-left: auto; padding-right: 16px; }
.t40 { width: 40px; }
.t30 { width: 30px; }
.lang { margin-right: 8px; }
.sg { margin-right: 12px; }
.clock { width: 93px; align-items: flex-end; }
.bell { width: 38px; }
.watermark { position: absolute; right: 14px; bottom: 7px; line-height: 20px; color: rgba(255, 255, 255, .6); }
```
